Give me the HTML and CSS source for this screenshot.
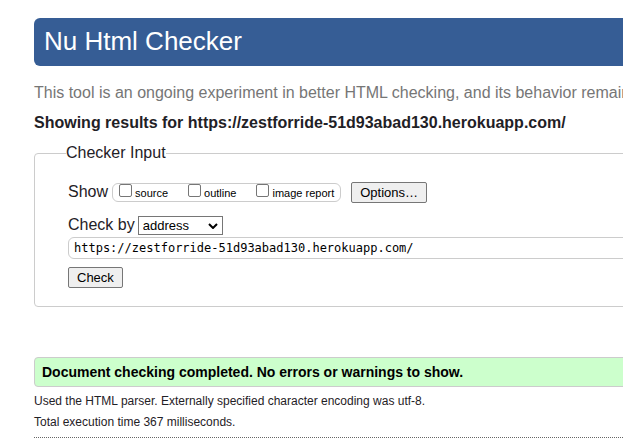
FILE: index.html
```html
<!DOCTYPE html>
<html lang="en">
<head>
<meta charset="utf-8">
<title>Nu Html Checker</title>
<link rel="stylesheet" href="styles.css">
</head>
<body>
<main class="page">
  <header class="banner"><h1>Nu Html Checker</h1></header>
  <p class="intro">This tool is an ongoing experiment in better HTML checking, and its behavior remains subject to change</p>
  <h2 class="results-title">Showing results for https://zestforride-51d93abad130.herokuapp.com/</h2>
  <form>
    <fieldset class="checker">
      <legend>Checker Input</legend>
      <div class="row">
        <span>Show</span>
        <div class="show-options">
          <label><input type="checkbox">source</label>
          <label><input type="checkbox">outline</label>
          <label><input type="checkbox">image report</label>
        </div>
        <button type="button" class="button">Options…</button>
      </div>
      <div class="row row-method">
        <label for="method">Check by</label>
        <div class="select-wrap">
          <select id="method"><option>address</option></select>
          <svg class="chevron" viewBox="0 0 10 6" aria-hidden="true"><path d="M1 1l4 4 4-4"/></svg>
        </div>
      </div>
      <input class="address" type="text" aria-label="Address" value="https://zestforride-51d93abad130.herokuapp.com/">
      <button type="button" class="button">Check</button>
    </fieldset>
  </form>
  <p class="success">Document checking completed. No errors or warnings to show.</p>
  <div class="details">
    <p>Used the HTML parser. Externally specified character encoding was utf-8.</p>
    <p>Total execution time 367 milliseconds.</p>
  </div>
</main>
</body>
</html>
```
FILE: styles.css
```css
* {
  box-sizing: border-box;
}

body {
  margin: 0;
  overflow: hidden;
  background: #fff;
  color: #1f2126;
  font: 16px/20px "Liberation Sans", Arial, sans-serif;
}

/* Content runs past the right edge of the window */
.page {
  margin: 0 -16px 0 34px;
  padding-top: 18px;
}

.banner {
  padding: 8px 10px 10px;
  border-radius: 6px;
  background: #365d95;
  color: #fff;
}

h1 {
  margin: 0;
  font-size: 26px;
  font-weight: normal;
  line-height: 30px;
}

.intro {
  margin: 17px 0 10px;
  color: #767676;
  white-space: nowrap;
}

.results-title {
  margin: 0;
  font-size: 16px;
  white-space: nowrap;
}

.checker {
  margin: 10px 0 0;
  padding: 18px 0 18px 33px;
  min-width: 0;
  border: 1px solid #ccc;
  border-radius: 4px;
}

legend {
  margin-left: -2px;
  padding: 0;
}

.row {
  display: flex;
  align-items: center;
  gap: 4px;
  height: 22px;
}

.row-method {
  gap: 3px;
  margin-top: 11px;
}

.show-options {
  display: flex;
  gap: 20px;
  height: 19px;
  margin-right: 6px;
  padding: 0 6px;
  border: 1px solid #ccc;
  border-radius: 6px;
  color: #000;
  font-size: 11px;
  line-height: 19px;
}

.show-options label {
  display: flex;
  gap: 3px;
}

.show-options input {
  appearance: none;
  width: 13px;
  height: 13px;
  margin: 0;
  border: 1px solid #767676;
  border-radius: 2px;
  background: #fff;
}

.show-options input:checked {
  background: #365d95;
}

.button {
  display: block;
  height: 21px;
  padding: 0 8px;
  border: 1px solid #767676;
  border-radius: 2px;
  background: #efefef;
  color: #000;
  font: 13px/19px "Liberation Sans", Arial, sans-serif;
}

.select-wrap {
  position: relative;
}

.select-wrap select {
  appearance: none;
  display: block;
  width: 85px;
  height: 19px;
  padding: 0 4px;
  border: 1px solid #767676;
  border-radius: 0;
  background: #fff;
  color: #000;
  font: 13px/17px "Liberation Sans", Arial, sans-serif;
}

.chevron {
  position: absolute;
  top: 7px;
  right: 5px;
  width: 10px;
  height: 6px;
  fill: none;
  stroke: #000;
  stroke-width: 2;
  pointer-events: none;
}

.address {
  display: block;
  width: 100%;
  height: 22px;
  margin: 1px 0 8px;
  padding: 0 5px;
  border: 1px solid #ccc;
  border-radius: 6px;
  color: #000;
  font: 12px/20px "DejaVu Sans Mono", monospace;
}

.success {
  margin: 50px 0 0;
  padding: 4px 7px;
  border: 1px solid #ccc;
  border-radius: 4px;
  background: #cfc;
  color: #000;
  font-size: 14px;
  font-weight: bold;
}

.details {
  padding: 4px 0;
  border-bottom: 1px dotted #666;
  font-size: 12px;
  line-height: 21px;
}

.details p {
  margin: 0;
}
```
